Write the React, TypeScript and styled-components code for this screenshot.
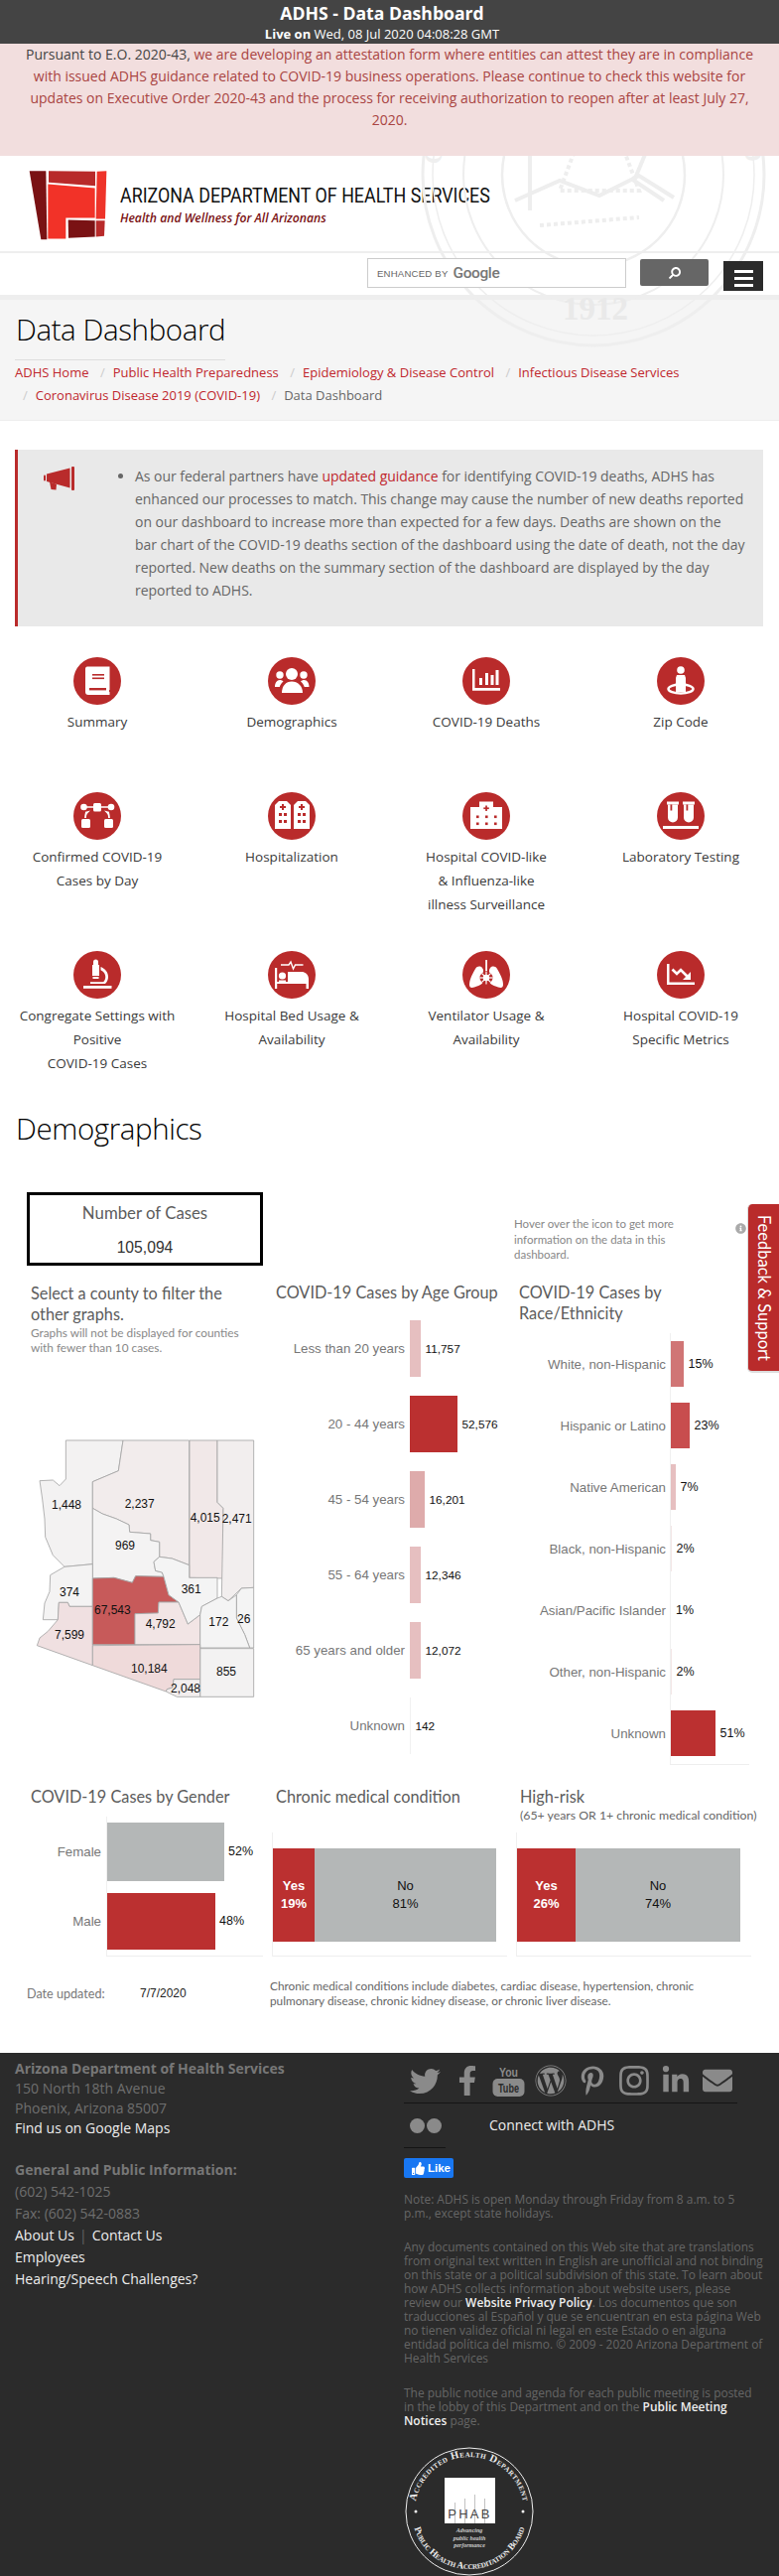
import React from "react";
import styled, { createGlobalStyle } from "styled-components";
import { FaTwitter, FaFacebookF, FaWordpress, FaPinterestP, FaInstagram, FaLinkedinIn, FaEnvelope, FaThumbsUp, FaSearch, FaInfoCircle } from "react-icons/fa";

const Global = createGlobalStyle`
  html, body { margin: 0; padding: 0; background: #fff; }
  body { font-family: "Open Sans", "Liberation Sans", sans-serif; color: #333; }
  * { box-sizing: border-box; }
  a { text-decoration: none; color: inherit; }
`;

const RED = "#b92b2b";
const TABLEAU = `"Lato", "Open Sans", sans-serif`;
const ARIAL = `"Liberation Sans", Arial, sans-serif`;

const Page = styled.div`position: relative; width: 785px; height: 2595px; overflow: hidden;`;

const TopBar = styled.header`
  height: 44px; background: #444; color: #fff; text-align: center; padding: 2px 15px 0 0;
`;
const TopTitle = styled.div`font-size: 17.6px; font-weight: 700; line-height: 23px;`;
const TopLive = styled.div`font-size: 13px; line-height: 18px; white-space: nowrap; b { font-weight: 700; }`;

const Banner = styled.div`
  height: 113px; background: #f2dede; color: #a94442; text-align: center;
  font-size: 14px; line-height: 22px; padding: 0 15px; 
  span { color: #444; }
`;

const HeaderZone = styled.div`position: relative; height: 267px; overflow: hidden;`;
const Masthead = styled.div`
  height: 98px; border-bottom: 2px solid #eee; display: flex; align-items: flex-start; padding: 14px 0 0 29px; gap: 13px;
`;
const MastText = styled.div`padding-top: 14px;`;
const MastTitle = styled.div`font-family: "Roboto", sans-serif; font-weight: 400; font-size: 20.4px; line-height: 24px; color: #111; white-space: nowrap; transform-origin: left; transform: scaleX(0.875); width: 373px;`;
const MastTag = styled.div`font-size: 12.2px; font-style: italic; color: #7a1214; line-height: 18px; margin-top: 2px; font-weight: 600;`;

const SearchRow = styled.div`
  height: 42px; position: relative; z-index: 1; display: flex; align-items: flex-start; padding: 5px 0 0 370px;
`;
const SearchBox = styled.div`
  width: 261px; height: 30px; border: 1px solid #ccc; background: #fff; display: flex; align-items: center; padding-left: 9px; gap: 5px;
`;
const Enhanced = styled.span`font-family: ${ARIAL}; font-size: 9.6px; color: #666; letter-spacing: .2px;`;
const GoogleWord = styled.span`font-family: "Roboto", sans-serif; font-size: 15.5px; color: #777; font-weight: 500; letter-spacing: -.4px;`;
const SearchButton = styled.button`
  width: 69px; height: 27px; border: 0; background: #666; margin-left: 14px; margin-top: 1px; color: #fff; border-radius: 2px; display: flex; align-items: center; justify-content: center; padding: 0;
`;
const MenuButton = styled.button`
  width: 40px; height: 30px; border: 0; background: #2b2b2b; margin-left: 15px; margin-top: 3px; display: flex; flex-direction: column; gap: 4px; align-items: center; justify-content: center; padding: 4px 0 0;
  i { display: block; width: 19px; height: 3px; background: #fff; }
`;
const TitleZone = styled.div`
  height: 127px; background: #f5f5f5; border-top: 5px solid #eee; border-bottom: 1px solid #eee; padding: 9px 15px 0;
`;
const PageTitle = styled.h1`
  display: inline-block; margin: 0; font-size: 29.5px; font-weight: 300; color: #000; line-height: 42px; border-bottom: 1px solid #ddd; padding: 0 0 1px 1px; width: 212px; height: 52px; white-space: nowrap; letter-spacing: -.4px;
`;
const Crumbs = styled.ol`list-style: none; margin: 1px 0 0; padding: 0; font-size: 13px; line-height: 23px; width: 740px;`;
const Crumb = styled.li`
  display: inline; color: #666;
  a { color: #c0272d; }
  &:not(:first-child)::before { content: "/"; padding: 0 8px; color: #ccc; }
`;
const Seal = styled.svg`position: absolute; left: 424px; top: -155px; pointer-events: none;`;

const Notice = styled.section`
  margin: 29px 16px 0 15px; height: 178px; background: #e9e9e9; border-left: 3px solid ${RED}; display: grid; grid-template-columns: 103px 1fr; padding-top: 15px; color: #666;
  font-size: 14px; line-height: 23px;
`;
const NoticeIcon = styled.div`padding: 2px 0 0 26px; svg { display: block; }`;
const NoticeList = styled.ul`margin: 0; padding: 0 0 0 15px; list-style: disc; letter-spacing: -.04px; a { color: #c0272d; } width: 636px;`;

const NavGrid = styled.nav`display: grid; grid-template-columns: repeat(4, 196px); margin-top: 31px;`;
const NavItem = styled.a`
  display: flex; flex-direction: column; align-items: center; padding: 0 10px 35px; text-align: center; color: #333;
`;
const NavCircle = styled.span`
  width: 48px; height: 48px; border-radius: 50%; background: ${RED}; display: block; margin-bottom: 5px; svg { display: block; }
`;
const NavLabel = styled.span`font-size: 13.5px; line-height: 24px; min-height: 48px; color: #3a3a3a;`;

const SectionTitle = styled.h2`margin: -3px 0 0 16px; font-size: 29.5px; font-weight: 300; color: #000; line-height: 44px; letter-spacing: -.4px;`;

const Dash = styled.section`margin-top: 42px; height: 867px;`;
const DashTop = styled.div`display: flex; height: 90px; align-items: flex-start; padding-left: 27px;`;
const CasesBox = styled.div`
  width: 238px; height: 74px; border: 3px solid #000; text-align: center; padding-top: 6px;
`;
const CasesLabel = styled.div`font-family: ${TABLEAU}; font-size: 16.8px; color: #5c5c5c; line-height: 24px;`;
const CasesValue = styled.div`font-family: ${ARIAL}; font-size: 15.7px; color: #333; line-height: 24px; margin-top: 11px;`;
const Hover = styled.div`font-family: ${TABLEAU}; font-size: 11.5px; line-height: 15.5px; color: #888; margin: 24px 0 0 253px; width: 195px;`;
const InfoMark = styled.div`color: #aaa; margin: 31px 0 0 28px; font-size: 11px; line-height: 0;`;

const Charts = styled.div`display: grid; grid-template-columns: 278px 245px 1fr;`;
const ChartTitle = styled.div`font-family: ${TABLEAU}; font-size: 16.3px; line-height: 21px; color: #5c5c5c;`;
const MapCol = styled.div`padding-top: 1px;`;
const MapIntro = styled.div`padding-left: 31px; width: 250px;`;
const MapNote = styled.div`font-family: ${TABLEAU}; font-size: 11.8px; color: #888; line-height: 15px; margin-top: 1px;`;
const MapSvg = styled.svg`display: block; margin-top: 65px;`;
const AgeTitle = styled(ChartTitle)`height: 29.5px; white-space: nowrap;`;
const RaceTitle = styled(ChartTitle)`height: 52px;`;

const BarRow = styled.div<{ $h: number; $pad: number; $label: number }>`
  display: grid; grid-template-columns: ${p => p.$label}px 1fr; height: ${p => p.$h}px; align-items: stretch;
  & > div:last-child { padding: ${p => p.$pad}px 0; display: flex; align-items: center; }
`;
const BarLabel = styled.div<{ $pr: number }>`
  font-family: ${ARIAL}; font-size: 13.3px; color: #777; text-align: right; padding-right: ${p => p.$pr}px; align-self: center; white-space: nowrap;
`;
const BarCell = styled.div<{ $axis?: boolean }>`border-left: ${p => (p.$axis ? "1px solid #f0f0f0" : "0")};`;
const Bar = styled.div<{ $w: number; $c: string }>`
  width: ${p => p.$w}px; height: 100%; background: ${p => p.$c}; flex: none;
`;
const BarValue = styled.span`font-family: ${ARIAL}; font-size: 11.8px; color: #111; margin-left: 4.5px;`;
const PctValue = styled(BarValue)`font-size: 12.5px;`;
const RaceBase = styled.div`margin-left: 152px; width: 80px; height: 1px; background: #eee;`;

const Lower = styled.div`display: grid; grid-template-columns: 274px 246px 1fr; margin-top: 22px;`;
const LowerTitle = styled(ChartTitle)<{ $pl: number }>`padding-left: ${p => p.$pl}px; white-space: nowrap; line-height: 20px;`;
const SubTitle = styled.div`font-family: ${TABLEAU}; font-size: 12.3px; color: #666; line-height: 18px; padding: 0 0 0 4px; white-space: nowrap;`;
const GenderPlot = styled.div`margin: 10px 0 0 0; width: 265px; `;
const GenderBase = styled.div`margin-left: 107px; height: 1px; background: #eee; width: 158px;`;
const StackHead = styled.div`height: 46px;`;
const StackPlot = styled.div`
  width: 237px; height: 125px; border-left: 1px solid #f0f0f0; border-bottom: 1px solid #eee; padding: 16px 11px 14px 0; display: flex;
`;
const Seg = styled.div<{ $w?: number; $red?: boolean }>`
  ${p => (p.$w ? `width: ${p.$w}px; flex: none;` : "flex: 1;")}
  background: ${p => (p.$red ? "#bb3030" : "#b4b7b7")}; color: ${p => (p.$red ? "#fff" : "#111")};
  font-family: ${ARIAL}; font-size: 13px; line-height: 18px; text-align: center; padding-top: 29px; font-weight: ${p => (p.$red ? 700 : 400)};
`;
const DateRow = styled.div`display: grid; grid-template-columns: 114px 131px 1fr; padding: 22px 0 0 27px;`;
const DateLabel = styled.div`font-family: ${TABLEAU}; font-size: 12.6px; color: #777; padding-top: 8px; line-height: 16px;`;
const DateValue = styled.div`font-family: ${ARIAL}; font-size: 12px; color: #222; padding-top: 8px; line-height: 15px;`;
const DateNote = styled.div`font-family: ${TABLEAU}; font-size: 11.8px; color: #666; line-height: 15px; width: 445px;`;

const Footer = styled.footer`
  height: 527px; background: #2b2b2b; display: grid; grid-template-columns: 392px 1fr; padding: 6px 0 0 15px;
  color: #777;
`;
const FootHead = styled.div`font-size: 14px; font-weight: 700; color: #777; line-height: 20px; white-space: nowrap;`;
const FootLine = styled.div`font-size: 14px; line-height: 20px; color: #6f6f6f;`;
const FootLink = styled.div`font-size: 14px; line-height: 20px; color: #eee;`;
const FootLine2 = styled(FootLine)`line-height: 22px;`;
const FootLink2 = styled(FootLink)`line-height: 22px; span { color: #666; padding: 0 5px; }`;
const FootHead2 = styled(FootHead)`margin-top: 21px; line-height: 22px;`;
const SocialRow = styled.div`
  display: flex; align-items: center; height: 45px; width: 336px; border-bottom: 1px solid #151515; color: #8a8a8a; padding: 0 0 0 0.5px;
`;
const SocialIcon = styled.span`width: 42px; display: flex; justify-content: center; flex: none; svg { display: block; }`;
const ConnectRow = styled.div`display: flex; align-items: center; height: 45px; width: 42px; border-bottom: 1px solid #151515; padding-left: 6px;`;
const Dots = styled.div`flex: none; display: flex; gap: 2px; i { width: 15px; height: 15px; border-radius: 50%; background: #8a8a8a; display: block; }`;
const ConnectText = styled.div`font-size: 14px; color: #eee; white-space: nowrap; margin-left: 48px; margin-top: -2px;`;
const LikeButton = styled.div`
  width: 50px; height: 20px; background: #1877f2; color: #fff; border-radius: 2px; margin-top: 10px; display: flex; align-items: center; gap: 3px; padding-left: 8px;
  font-family: ${ARIAL}; font-size: 11.5px; font-weight: 700;
`;
const Legal = styled.p`
  margin: 0; font-size: 11.95px; line-height: 14px; color: #666; width: 363px; a { color: #eee; font-weight: 600; }
`;
const LegalNote = styled(Legal)`margin-top: 15px;`;
const LegalDocs = styled(Legal)`margin-top: 20px;`;
const LegalPublic = styled(Legal)`margin-top: 21px;`;
const PhabSvg = styled.svg`display: block; margin: 19px 0 0 1px;`;

const Feedback = styled.a`
  position: absolute; left: 753px; top: 1213px; width: 32px; height: 170px; background: ${RED}; color: #fff; border-radius: 5px 0 0 5px; border-bottom: 2px solid #ddd; border-left: 1px solid #ddd;
  writing-mode: vertical-rl; display: flex; align-items: center; justify-content: center; font-family: ${TABLEAU}; font-size: 16.5px; white-space: nowrap;
`;

const W = "#fff";
const icons: Record<string, React.ReactNode> = {
  book: <>
    <path d="M14 9.500h22.500v23.500h-.5v2H36.500v3H15c-2 0-3-1.300-3-3V12c0-1.500.7-2.500 2-2.500z" fill={W} />
    <rect x="19" y="17" width="12" height="1.600" fill={RED} /><rect x="19" y="20.500" width="12" height="1.600" fill={RED} /><rect x="16" y="31" width="17" height="2.400" fill={RED} />
  </>,
  people: <>
    <circle cx="24" cy="17" r="6" fill={W} /><circle cx="12" cy="18" r="3.700" fill={W} /><circle cx="36" cy="18" r="3.700" fill={W} />
    <path d="M14 36c0-7 4-11.500 10-11.500S35 29 35 36z" fill={W} />
    <path d="M7 30c0-4 2-7 5-7 1.500 0 2.500.5 3.500 1.500-2 1.800-3.200 3.500-3.700 5.500z" fill={W} />
    <path d="M41.500 30c0-4-2-7-5-7-1.500 0-2.500.5-3.500 1.500 2 1.800 3.200 3.500 3.700 5.500z" fill={W} />
  </>,
  chart: <>
    <path d="M10 12h2.500v19H38v2.800H10z" fill={W} />
    <rect x="17" y="21" width="3" height="7" fill={W} /><rect x="23" y="16" width="3" height="12" fill={W} /><rect x="28.500" y="18" width="3" height="10" fill={W} /><rect x="33.500" y="13" width="3" height="15" fill={W} />
  </>,
  zip: <>
    <circle cx="24" cy="13" r="3.800" fill={W} />
    <path d="M20 18h8l1 3v14h-10V21z" fill={W} />
    <ellipse cx="24" cy="32" rx="12.500" ry="4.500" fill="none" stroke={W} strokeWidth="2.500" />
    <rect x="20" y="27" width="8" height="7" fill={W} />
  </>,
  flow: <>
    <rect x="20" y="11" width="8" height="8.500" rx="1.500" fill={W} />
    <circle cx="10.500" cy="15" r="3.300" fill={W} /><circle cx="38" cy="15" r="3.300" fill={W} />
    <path d="M13 15h7M28 15h7" stroke={W} strokeWidth="1.600" />
    <path d="M13 20c-.5 2-1 4-1 6M35 20c.5 2 1 4 1 6" stroke={W} strokeWidth="1.800" fill="none" />
    <path d="M17 18.500l-4.800 1.300.8 3zM31 18.500l4.800 1.300-.8 3z" fill={W} />
    <rect x="8" y="27" width="9" height="9" rx="1.500" fill={W} /><rect x="31" y="27" width="9" height="9" rx="1.500" fill={W} />
  </>,
  twin: <>
    {[7, 26].map(x => (
      <g key={x}>
        <path d={`M${x + 2} 11l2-2h8l2 2 2 2v24H${x}V13z`} fill={W} />
        <rect x={x + 7} y="12" width="2" height="6" fill={RED} /><rect x={x + 5} y="14" width="6" height="2" fill={RED} />
        <rect x={x + 4} y="21" width="3" height="3" fill={RED} /><rect x={x + 9} y="21" width="3" height="3" fill={RED} />
        <rect x={x + 4} y="28" width="3" height="3" fill={RED} /><rect x={x + 9} y="28" width="3" height="3" fill={RED} />
      </g>
    ))}
  </>,
  hospital: <>
    <path d="M17 15V9.500h14V15h9v22H8V15z" fill={W} />
    <rect x="23.200" y="13.500" width="1.700" height="5.500" fill={RED} /><rect x="21.300" y="15.400" width="5.500" height="1.700" fill={RED} />
    {[14, 23, 32].flatMap(x => [23.500, 30.500].map(y => <rect key={`${x}${y}`} x={x} y={y} width="2.600" height="2.600" fill={RED} />))}
  </>,
  tubes: <>
    {[10, 26].map(x => (
      <g key={x}>
        <rect x={x} y="9.500" width="12" height="3" fill={W} />
        <path d={`M${x + 1} 12.500h10v13a5 5 0 0 1-10 0z`} fill={W} />
        <rect x={x + 3.500} y="12.500" width="1.800" height="6" fill={RED} />
      </g>
    ))}
    <rect x="6" y="34" width="36" height="3" fill={W} />
  </>,
  scope: <>
    <path d="M20 11a2.500 2.500 0 0 1 5 0v3h1v11h-7V14h1z" fill={W} />
    <rect x="19.500" y="26" width="6" height="2" fill={W} />
    <path d="M27.500 16c4.500 1.800 7.500 5.500 7.500 10 0 2.800-1 5-3 7h-4c3-1.800 4.300-4.200 4.300-7 0-3-1.800-5.500-4.800-6.800z" fill={W} />
    <rect x="17" y="31.200" width="13" height="1.800" fill={W} />
    <rect x="10" y="35" width="28.500" height="2.800" fill={W} />
  </>,
  bed: <>
    <path d="M13 14h8l2-3 2.500 7 2-4h8" fill="none" stroke={W} strokeWidth="1.400" />
    <rect x="7" y="17" width="2.200" height="21" fill={W} />
    <circle cx="14.500" cy="25" r="3.600" fill={W} />
    <path d="M20 21h14c3 0 7 2.500 7 7v10h-2.500v-5H9v-2h11z" fill={W} />
    <rect x="11" y="29.500" width="7" height="2" fill={W} />
  </>,
  lungs: <>
    <rect x="23.200" y="9" width="1.800" height="11" fill={W} />
    <path d="M20 17c-2-2-5-2-7 1-3 5-6 11-6 16 0 3 2 3.500 5 2.500 3-1 9-3 9-6V19z" fill={W} />
    <path d="M28 17c2-2 5-2 7 1 3 5 6 11 6 16 0 3-2 3.500-5 2.500-3-1-9-3-9-6V19z" fill={W} />
    <circle cx="24" cy="27" r="6.500" fill={RED} />
    <circle cx="24" cy="27" r="3.200" fill={W} />
    {[0, 45, 90, 135, 180, 225, 270, 315].map(a => <rect key={a} x="23.400" y="20.500" width="1.200" height="4" fill={W} transform={`rotate(${a} 24 27)`} />)}
  </>,
  down: <>
    <path d="M10 13h2.500v18.500H38V34H10z" fill={W} />
    <path d="M15.500 18.500l4.500 4.500 4-4 7 7" fill="none" stroke={W} strokeWidth="2.600" />
    <path d="M34 21v8h-8z" fill={W} />
  </>,
};

const nav: [string, string[]][] = [
  ["book", ["Summary"]], ["people", ["Demographics"]], ["chart", ["COVID-19 Deaths"]], ["zip", ["Zip Code"]],
  ["flow", ["Confirmed COVID-19", "Cases by Day"]], ["twin", ["Hospitalization"]], ["hospital", ["Hospital COVID-like", "& Influenza-like", "illness Surveillance"]], ["tubes", ["Laboratory Testing"]],
  ["scope", ["Congregate Settings with", "Positive", "COVID-19 Cases"]], ["bed", ["Hospital Bed Usage &", "Availability"]], ["lungs", ["Ventilator Usage &", "Availability"]], ["down", ["Hospital COVID-19", "Specific Metrics"]],
];

const age: [string, string, number, string][] = [
  ["Less than 20 years", "11,757", 11, "#e6bfc0"], ["20 -  44 years", "52,576", 48, "#bb3030"], ["45 - 54 years", "16,201", 15, "#deabab"],
  ["55 - 64 years", "12,346", 11, "#e6bfc0"], ["65 years and older", "12,072", 11, "#e6bfc0"], ["Unknown", "142", 1, "#f1f1f1"],
];
const race: [string, string, number, string][] = [
  ["White, non-Hispanic", "15%", 13, "#d07575"], ["Hispanic or Latino", "23%", 19, "#c84d4e"], ["Native American", "7%", 5, "#e6bfc0"],
  ["Black, non-Hispanic", "2%", 1, "#f3e6e6"], ["Asian/Pacific Islander", "1%", 0.5, "#fff"], ["Other, non-Hispanic", "2%", 1, "#f3e6e6"], ["Unknown", "51%", 45, "#bb3030"],
];

const counties: [string, string][] = [
  ["199,63 372,63 358,155 280,188 280,437 195,445 160,410 137,355 135,300 128,240 120,185 160,183 180,200 199,180", "#f3f2f2"],
  ["372,63 572,63 572,440 520,420 482,415 482,370 455,365 455,345 392,340 390,318 352,300 310,285 280,268 280,188 358,155", "#f2ecec"],
  ["280,268 310,285 352,300 390,318 392,340 455,345 455,365 482,370 482,415 465,430 470,457 490,462 495,475 410,473 400,493 345,478 280,480", "#f4f3f3"],
  ["573,63 657,63 657,250 675,268 675,480 573,478", "#f1e8e8"],
  ["657,63 767,63 767,508 730,510 690,548 670,535 675,268 657,250", "#f2eeee"],
  ["195,445 280,437 280,565 210,565 205,553 178,553 175,605 130,605 135,555 150,520 152,470", "#f4f3f3"],
  ["178,553 205,553 210,565 280,565 280,743 112,683 120,660 145,640 175,605", "#f0e0e1"],
  ["280,480 345,478 400,493 410,473 495,475 510,530 540,552 480,552 478,585 408,587 408,680 280,680", "#c75a5a"],
  ["408,587 478,585 480,552 540,552 568,618 605,590 605,680 408,680", "#f2e5e5"],
  ["465,430 482,415 520,420 572,440 572,478 657,478 657,540 610,565 605,590 568,618 540,552 510,530 495,475 490,462 470,457", "#f4f4f4"],
  ["715,530 730,510 767,508 767,690 755,690 740,650 715,600", "#f4f4f4"],
  ["605,590 610,565 657,540 670,535 690,548 715,530 715,600 740,650 755,690 605,690", "#f4f4f4"],
  ["605,692 767,692 767,838 605,838", "#f3f2f2"],
  ["280,683 605,680 605,785 525,785 522,810 505,815 502,822 280,743", "#efdada"],
  ["525,785 605,785 605,838 535,838 502,822 505,815 522,810", "#f3eeee"],
];
const mapLabels: [string, number, number][] = [
  ["1,448", 201, 258], ["2,237", 422, 255], ["969", 378, 383], ["4,015", 620, 299], ["2,471", 716, 301], ["374", 210, 524], ["361", 578, 515],
  ["67,543", 340, 578], ["4,792", 485, 618], ["172", 661, 612], ["26", 737, 603], ["7,599", 210, 651], ["10,184", 451, 755], ["855", 684, 764], ["2,048", 561, 813],
];

const Logo = () => (
  <svg width="79" height="71" viewBox="85 60 237 212" aria-hidden>
    <polygon points="87,63 137,63 140,270 122,270" fill="#7a1214" />
    <polygon points="145,63 286,65 286,108 145,98" fill="#b82a2a" />
    <polygon points="291,65 320,63 316,208 288,208" fill="#ee3329" />
    <polygon points="288,213 315,213 313,260 288,262" fill="#b82a2a" />
    <polygon points="143,103 285,115 285,205 197,205 197,268 143,268" fill="#f23228" />
    <polygon points="204,211 285,213 285,262 205,266" fill="#7a1214" />
  </svg>
);

const Megaphone = () => (
  <svg width="31" height="24" viewBox="0 0 31 24" aria-hidden fill={RED}>
    <rect x="28" y="0" width="3" height="24" rx="1" />
    <path d="M3 7.500L26.500 1.500v20L3 15z" />
    <rect x="0" y="8.500" width="2" height="6" rx="1" />
    <path d="M6 15.500l7 2.300-.5 5.700L7.500 23z" />
  </svg>
);

const SealMark = () => (
  <Seal width="348" height="348" viewBox="0 0 348 348" aria-hidden>
    <defs><path id="sealArc" d="M 20 174 A 154 154 0 1 1 328 174" /></defs>
    <g fill="none" stroke="#eeeeee">
      <circle cx="174" cy="174" r="172" strokeWidth="3" />
      <circle cx="174" cy="174" r="162" strokeWidth="1.500" />
      <circle cx="174" cy="174" r="131" strokeWidth="2" />
      <circle cx="174" cy="174" r="92" strokeWidth="2.500" />
      <path d="M92 130l25-40 25 25 25-35 30 32 30-25 25 44M95 200l45-20 40 15 40-20 35 22M110 140v70M240 120l-25 60 30 20" strokeWidth="4" />
      <path d="M155 150h50l15 40h-80zM120 225l100-8" strokeWidth="4" strokeDasharray="4 3" />
    </g>
    <text fontFamily='"Liberation Serif", serif' fontWeight="700" fontSize="25" fill="#efefef" letterSpacing="4"><textPath href="#sealArc" startOffset="2%">GREAT SEAL OF THE STATE OF ARIZONA</textPath></text>
    <text x="176" y="320" textAnchor="middle" fontFamily='"Liberation Serif", serif' fontSize="33" fontWeight="700" fill="#e9e9e9">1912</text>
  </Seal>
);

const YouTube = () => (
  <svg width="33" height="32" viewBox="0 0 33 32" aria-hidden>
    <text x="16.500" y="12" textAnchor="middle" fontFamily={ARIAL} fontSize="12.500" fontWeight="700" fill="#8a8a8a" textLength="19" lengthAdjust="spacingAndGlyphs">You</text>
    <rect x="0.500" y="14" width="32" height="18" rx="5" fill="#8a8a8a" />
    <text x="16.500" y="27.500" textAnchor="middle" fontFamily={ARIAL} fontSize="12.500" fontWeight="700" fill="#2b2b2b" textLength="21" lengthAdjust="spacingAndGlyphs">Tube</text>
  </svg>
);

const Phab = () => (
  <PhabSvg width="130" height="130" viewBox="0 0 130 130" aria-hidden>
    <defs>
      <path id="phabTop" d="M 10 65 A 55 55 0 0 1 120 65" />
      <path id="phabBottom" d="M 7 65 A 58 58 0 0 0 123 65" />
    </defs>
    <circle cx="65" cy="65" r="64" fill="none" stroke="#eee" strokeWidth="1" />
    <text fontFamily='"Liberation Serif", serif' fontWeight="700" fontSize="10.500" fill="#eee" style={{ fontVariant: "small-caps" }}>
      <textPath href="#phabTop" startOffset="50%" textAnchor="middle" textLength="152" lengthAdjust="spacing">Accredited Health Department</textPath>
    </text>
    <text fontFamily='"Liberation Serif", serif' fontWeight="700" fontSize="9.500" fill="#eee" style={{ fontVariant: "small-caps" }}>
      <textPath href="#phabBottom" startOffset="50%" textAnchor="middle" textLength="148" lengthAdjust="spacing">Public Health Accreditation Board</textPath>
    </text>
    <circle cx="11" cy="65" r="1.500" fill="#eee" /><circle cx="119" cy="65" r="1.500" fill="#eee" />
    <rect x="40" y="31" width="51" height="46" fill="#fff" />
    <path d="M50.500 56v21M60.500 52v25M70.500 48v29M80.500 52v25" stroke="#999" strokeWidth=".6" />
    <text x="65.500" y="72" textAnchor="middle" fontFamily={ARIAL} fontSize="13" fill="#444" letterSpacing="2.300">PHAB</text>
    <g fontFamily='"Liberation Serif", serif' fontStyle="italic" fontSize="6" fill="#ccc" textAnchor="middle" fontWeight="700">
      <text x="65" y="86">Advancing</text><text x="65" y="93.500">public health</text><text x="65" y="101">performance</text>
    </g>
  </PhabSvg>
);

export default function App() {
  return (
    <Page>
      <Global />
      <TopBar>
        <TopTitle>ADHS - Data Dashboard</TopTitle>
        <TopLive><b>Live on</b> Wed, 08 Jul 2020 04:08:28 GMT</TopLive>
      </TopBar>
      <Banner>
        <span>Pursuant to E.O. 2020-43,</span> we are developing an attestation form where entities can attest they are in compliance with issued ADHS guidance related to COVID-19 business operations. Please continue to check this website for updates on Executive Order 2020-43 and the process for receiving authorization to reopen after at least July 27, 2020.
      </Banner>
      <HeaderZone>
        <Masthead>
          <Logo />
          <MastText>
            <MastTitle>ARIZONA DEPARTMENT OF HEALTH SERVICES</MastTitle>
            <MastTag>Health and Wellness for All Arizonans</MastTag>
          </MastText>
        </Masthead>
        <SearchRow>
          <SearchBox><Enhanced>ENHANCED BY</Enhanced><GoogleWord>Google</GoogleWord></SearchBox>
          <SearchButton aria-label="Search"><FaSearch size={12} style={{ transform: "scaleX(-1)" }} /></SearchButton>
          <MenuButton aria-label="Menu"><i /><i /><i /></MenuButton>
        </SearchRow>
        <TitleZone>
          <PageTitle>Data Dashboard</PageTitle>
          <Crumbs>
            <Crumb><a>ADHS Home</a></Crumb>{" "}
            <Crumb><a>Public Health Preparedness</a></Crumb>{" "}
            <Crumb><a>Epidemiology &amp; Disease Control</a></Crumb>{" "}
            <Crumb><a>Infectious Disease Services</a></Crumb>{" "}
            <Crumb><a>Coronavirus Disease 2019 (COVID-19)</a></Crumb>{" "}
            <Crumb>Data Dashboard</Crumb>
          </Crumbs>
        </TitleZone>
        <SealMark />
      </HeaderZone>
      <Notice>
        <NoticeIcon><Megaphone /></NoticeIcon>
        <NoticeList>
          <li>As our federal partners have <a>updated guidance</a> for identifying COVID-19 deaths, ADHS has enhanced our processes to match. This change may cause the number of new deaths reported on our dashboard to increase more than expected for a few days. Deaths are shown on the<br />bar chart of the COVID-19 deaths section of the dashboard using the date of death, not the day reported. New deaths on the summary section of the dashboard are displayed by the day reported to ADHS.</li>
        </NoticeList>
      </Notice>
      <NavGrid>
        {nav.map(([k, lines]) => (
          <NavItem key={k}>
            <NavCircle><svg width="48" height="48" viewBox="0 0 48 48" aria-hidden>{icons[k]}</svg></NavCircle>
            <NavLabel>{lines.map((l, i) => <React.Fragment key={i}>{i > 0 && <br />}{l}</React.Fragment>)}</NavLabel>
          </NavItem>
        ))}
      </NavGrid>
      <SectionTitle>Demographics</SectionTitle>
      <Dash>
        <DashTop>
          <CasesBox><CasesLabel>Number of Cases</CasesLabel><CasesValue>105,094</CasesValue></CasesBox>
          <Hover>Hover over the icon to get more information on the data in this dashboard.</Hover>
          <InfoMark><FaInfoCircle /></InfoMark>
        </DashTop>
        <Charts>
          <MapCol>
            <MapIntro>
              <ChartTitle>Select a county to filter the other graphs.</ChartTitle>
              <MapNote>Graphs will not be displayed for counties with fewer than 10 cases.</MapNote>
            </MapIntro>
            <MapSvg width="270" height="300" viewBox="0 0 810 900" aria-label="Arizona county map">
              {counties.map(([pts, fill], i) => <polygon key={i} points={pts} fill={fill} stroke="#a5a5a5" strokeWidth="2.500" strokeLinejoin="round" />)}
              {mapLabels.map(([t, x, y]) => <text key={t} x={x} y={y + 11} textAnchor="middle" fontFamily={ARIAL} fontSize="36" fill="#111">{t}</text>)}
            </MapSvg>
          </MapCol>
          <div>
            <AgeTitle>COVID-19 Cases by Age Group</AgeTitle>
            {age.map(([l, v, w, c]) => (
              <BarRow key={l} $h={76} $pad={9.5} $label={135}>
                <BarLabel $pr={5}>{l}</BarLabel>
                <BarCell><Bar $w={w} $c={c} /><BarValue>{v}</BarValue></BarCell>
              </BarRow>
            ))}
          </div>
          <div>
            <RaceTitle>COVID-19 Cases by<br />Race/Ethnicity</RaceTitle>
            {race.map(([l, v, w, c], i) => (
              <BarRow key={i} $h={62} $pad={8} $label={152}>
                <BarLabel $pr={4}>{l}</BarLabel>
                <BarCell $axis><Bar $w={w} $c={c} /><PctValue>{v}</PctValue></BarCell>
              </BarRow>
            ))}
            <RaceBase />
          </div>
        </Charts>
        <Lower>
          <div>
            <LowerTitle $pl={31}>COVID-19 Cases by Gender</LowerTitle>
            <GenderPlot>
              <BarRow $h={70.5} $pad={6} $label={107}>
                <BarLabel $pr={5}>Female</BarLabel>
                <BarCell $axis><Bar $w={117.5} $c="#b4b7b7" /><PctValue>52%</PctValue></BarCell>
              </BarRow>
              <BarRow $h={69.5} $pad={6} $label={107}>
                <BarLabel $pr={5}>Male</BarLabel>
                <BarCell $axis><Bar $w={108.5} $c="#bb3030" /><PctValue>48%</PctValue></BarCell>
              </BarRow>
              <GenderBase />
            </GenderPlot>
          </div>
          <div>
            <StackHead><LowerTitle $pl={4}>Chronic medical condition</LowerTitle></StackHead>
            <StackPlot>
              <Seg $w={42} $red>Yes<br />19%</Seg>
              <Seg>No<br />81%</Seg>
            </StackPlot>
          </div>
          <div>
            <StackHead><LowerTitle $pl={4}>High-risk</LowerTitle><SubTitle>(65+ years OR 1+ chronic medical condition)</SubTitle></StackHead>
            <StackPlot>
              <Seg $w={59} $red>Yes<br />26%</Seg>
              <Seg>No<br />74%</Seg>
            </StackPlot>
          </div>
        </Lower>
        <DateRow>
          <DateLabel>Date updated:</DateLabel>
          <DateValue>7/7/2020</DateValue>
          <DateNote>Chronic medical conditions include diabetes, cardiac disease, hypertension, chronic pulmonary disease, chronic kidney disease, or chronic liver disease.</DateNote>
        </DateRow>
      </Dash>
      <Footer>
        <div>
          <FootHead>Arizona Department of Health Services</FootHead>
          <FootLine>150 North 18th Avenue</FootLine>
          <FootLine>Phoenix, Arizona 85007</FootLine>
          <FootLink>Find us on Google Maps</FootLink>
          <FootHead2>General and Public Information:</FootHead2>
          <FootLine2>(602) 542-1025</FootLine2>
          <FootLine2>Fax: (602) 542-0883</FootLine2>
          <FootLink2>About Us<span>|</span>Contact Us</FootLink2>
          <FootLink2>Employees</FootLink2>
          <FootLink2>Hearing/Speech Challenges?</FootLink2>
        </div>
        <div>
          <SocialRow>
            <SocialIcon><FaTwitter size={31} /></SocialIcon>
            <SocialIcon><FaFacebookF size={30} /></SocialIcon>
            <SocialIcon><YouTube /></SocialIcon>
            <SocialIcon><FaWordpress size={32} /></SocialIcon>
            <SocialIcon><FaPinterestP size={30} /></SocialIcon>
            <SocialIcon><FaInstagram size={34} /></SocialIcon>
            <SocialIcon><FaLinkedinIn size={30} /></SocialIcon>
            <SocialIcon><FaEnvelope size={30} /></SocialIcon>
          </SocialRow>
          <ConnectRow><Dots><i /><i /></Dots><ConnectText>Connect with ADHS</ConnectText></ConnectRow>
          <LikeButton><FaThumbsUp size={13} /> Like</LikeButton>
          <LegalNote>Note: ADHS is open Monday through Friday from 8 a.m. to 5 p.m., except state holidays.</LegalNote>
          <LegalDocs>Any documents contained on this Web site that are translations from original text written in English are unofficial and not binding on this state or a political subdivision of this state. To learn about how ADHS collects information about website users, please review our <a>Website Privacy Policy</a>. Los documentos que son traducciones al Español y que se encuentran en esta página Web no tienen validez oficial ni legal en este Estado o en alguna entidad política del mismo. © 2009 - 2020 Arizona Department of Health Services</LegalDocs>
          <LegalPublic>The public notice and agenda for each public meeting is posted in the lobby of this Department and on the <a>Public Meeting Notices</a> page.</LegalPublic>
          <Phab />
        </div>
      </Footer>
      <Feedback>Feedback &amp; Support</Feedback>
    </Page>
  );
}
